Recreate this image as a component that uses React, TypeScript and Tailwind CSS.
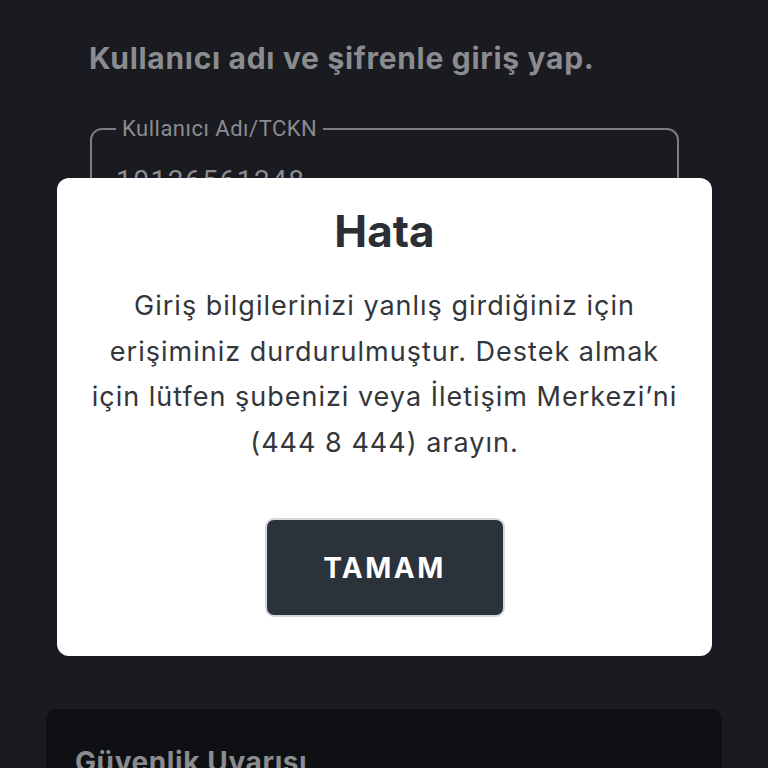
export default function App() {
  return (
    <div
      className="relative h-[768px] w-[768px] overflow-hidden bg-[#191b20]"
      style={{ fontFamily: 'Inter, "Noto Sans", sans-serif' }}
    >
      {/* login screen behind the dialog */}
      <div className="flex flex-col">
        <div className="pl-[89px] pt-[36px]">
          <h1 className="text-[30px] font-bold leading-[44px] tracking-[0.7px] text-[#8b8c8f]">
            Kullanıcı adı ve şifrenle giriş yap.
          </h1>
        </div>

        <div className="mt-[38px] pl-[90px] pr-[89px]">
          <fieldset className="h-[120px] rounded-[12px] border-2 border-[#7b7c80] pl-[24px] pr-[22px]">
            <legend
              className="px-[6px] text-[22px] leading-[22px] tracking-[0.5px] text-[#8b8c8f]"
              style={{ fontFamily: 'Roboto, sans-serif' }}
            >
              Kullanıcı Adı/TCKN
            </legend>
            <div
              className="pt-[26px] text-[28px] leading-[30px] tracking-[1.5px] text-[#8b8c8f]"
              style={{ fontFamily: 'Roboto, sans-serif' }}
            >
              10126561248
            </div>
          </fieldset>
        </div>

        <div className="mt-[471px] px-[46px]">
          <div className="h-[120px] rounded-[10px] bg-[#0f1013] px-[29px] pt-[32px]">
            <h2 className="text-[28px] font-bold tracking-[0.6px] text-[#8b8c8f]">Güvenlik Uyarısı</h2>
          </div>
        </div>
      </div>

      {/* error dialog */}
      <div className="absolute left-[57px] top-[178px] flex h-[478px] w-[655px] flex-col items-center rounded-[12px] bg-white">
        <h3 className="mt-[28px] text-[44px] font-bold leading-[50px] text-[#2b2f35]">
          Hata
        </h3>
        <p className="mt-[27px] w-[650px] text-center text-[27px] leading-[45.5px] tracking-[1px] text-[#33363b]">
          Giriş bilgilerinizi yanlış girdiğiniz için
          <br />
          erişiminiz durdurulmuştur. Destek almak
          <br />
          için lütfen şubenizi veya İletişim Merkezi’ni
          <br />
          (444 8 444) arayın.
        </p>
        <button className="mt-[53px] flex h-[99px] w-[240px] items-center justify-center rounded-[9px] border-2 border-[#d4d7de] bg-[#2b323a] text-[28px] font-bold tracking-[2.5px] text-white">
          TAMAM
        </button>
      </div>
    </div>
  )
}
